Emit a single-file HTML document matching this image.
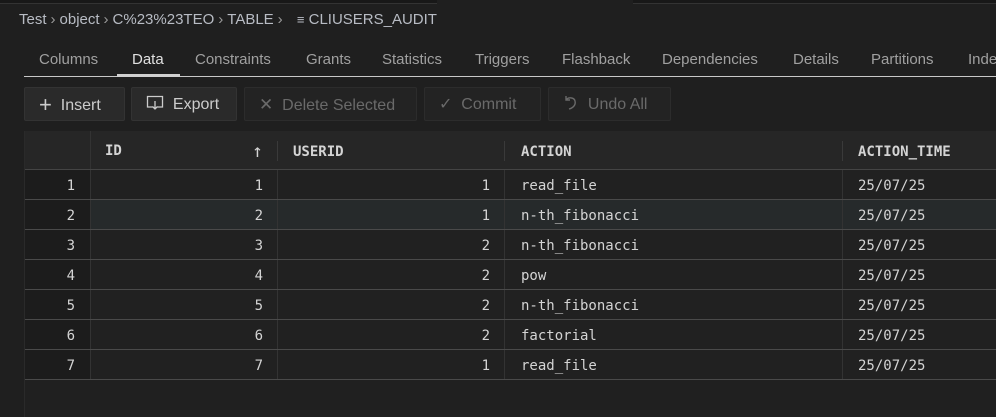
<!DOCTYPE html>
<html><head><style>
*{box-sizing:border-box;margin:0;padding:0}
body{width:996px;height:417px;background:#1f1f1f;font-family:"Liberation Sans",sans-serif;color:#ccc;overflow:hidden;position:relative}
.abs{position:absolute}
.bc{left:19px;top:11px;font-size:15px;color:#b8bcc4;white-space:nowrap}
.bc span.s{color:#9a9a9a;margin:0 4px}
.tabs{left:24px;top:47px;right:0;height:30px;border-bottom:1px solid #c8c8c8;font-size:15px;color:#a0a0a0;white-space:nowrap}
.tabs span{position:absolute;top:4px}
.btn{position:absolute;top:87px;height:34px;border:1px solid #333;background:#2a2a2a;border-radius:2px;font-size:16px;color:#ccc;padding-left:14px;line-height:34px;white-space:nowrap}
.btn.d{background:#232323;color:#6a6a6a;border-color:#2c2c2c}
.tbl{left:24px;top:131px;width:972px;height:286px;background:#202020;border-left:1px solid #2a2a2a}
.row{position:absolute;left:0;width:972px;height:30px;border-bottom:1px solid #4a4a4a;font-family:"DejaVu Sans Mono","Liberation Mono",monospace;font-size:14px;color:#d4d4d4}
.c{position:absolute;top:0;height:100%;line-height:33px;border-left:1px solid #333}
.hd{background:#262626;height:39px;font-weight:bold;border-bottom:1px solid #444}
.hd .c{line-height:39px;border-left:none}
</style></head><body>
<div class="abs" style="left:0;top:0;width:437px;height:4px;background:#181818;border-bottom:1px solid #333"></div>
<div class="abs" style="left:633px;top:0;width:363px;height:4px;background:#181818;border-bottom:1px solid #333"></div>
<div class="abs bc">Test<span class="s">›</span>object<span class="s">›</span>C%23%23TEO<span class="s">›</span>TABLE<span class="s">›</span> <span style="margin-left:6px;font-size:13px">&#8801;</span> CLIUSERS_AUDIT</div>
<div class="abs tabs">
<span style="left:15px">Columns</span><span style="left:108px;color:#e0e0e0">Data</span><span style="left:171px">Constraints</span><span style="left:282px">Grants</span><span style="left:358px">Statistics</span><span style="left:451px">Triggers</span><span style="left:538px">Flashback</span><span style="left:638px">Dependencies</span><span style="left:769px">Details</span><span style="left:847px">Partitions</span><span style="left:944px">Inde</span>
<div class="abs" style="left:93px;top:27px;width:63px;height:3px;background:#d0d0d0"></div>
</div>
<div class="btn" style="left:24px;width:101px"><span style="font-size:22px;vertical-align:-2px">+</span>&nbsp; Insert</div>
<div class="btn" style="left:131px;width:106px"><svg width="18" height="16" style="vertical-align:-2px" fill="none" stroke="#ccc" stroke-width="1.3"><path d="M7 12H1.5V1.5h15V12H11M9 6v8M6.5 11.5L9 14l2.5-2.5"/></svg>&nbsp; Export</div>
<div class="btn d" style="left:244px;width:173px"><span style="font-size:17px">&#10005;</span>&nbsp; Delete Selected</div>
<div class="btn d" style="left:424px;width:117px">&#10003;&nbsp; Commit</div>
<div class="btn d" style="left:548px;width:123px"><svg width="16" height="18" style="vertical-align:-3px" fill="none" stroke="#6a6a6a" stroke-width="1.4"><path d="M3 2v4h4M3 6c2-3 8-3 9 1s-2 7-6 8"/></svg>&nbsp; Undo All</div>
<div class="abs tbl">
<div class="row hd" style="top:0"><div class="c" style="left:65px;width:187px;padding-left:14px;border-left:1px solid #333;line-height:41px">ID<span style="position:absolute;right:14px;font-weight:normal;font-size:18px">&#8593;</span></div><div class="c" style="left:252px;width:227px;padding-left:15px;border-left:1px solid #3a3a3a;height:20px;top:10px;line-height:22px">USERID</div><div class="c" style="left:479px;width:338px;padding-left:16px;border-left:1px solid #3a3a3a;height:20px;top:10px;line-height:22px">ACTION</div><div class="c" style="left:817px;padding-left:15px;border-left:1px solid #3a3a3a;height:20px;top:10px;line-height:22px">ACTION_TIME</div></div>
</div>
<script>
var d=[[1,1,'read_file'],[2,1,'n-th_fibonacci'],[3,2,'n-th_fibonacci'],[4,2,'pow'],[5,2,'n-th_fibonacci'],[6,2,'factorial'],[7,1,'read_file']];
var t=document.querySelector('.tbl'),h='';
d.forEach(function(r,i){var bg=i==1?'#262a2b':'#212121';
h+='<div class="row" style="top:'+(39+i*30)+'px;background:'+bg+'"><div class="c" style="left:0;width:65px;background:#1c1c1c;text-align:right;padding-right:15px;border-left:none">'+r[0]+'</div><div class="c" style="left:65px;width:187px;text-align:right;padding-right:14px">'+r[0]+'</div><div class="c" style="left:252px;width:227px;text-align:right;padding-right:14px">'+r[1]+'</div><div class="c" style="left:479px;width:338px;padding-left:16px">'+r[2]+'</div><div class="c" style="left:817px;padding-left:15px">25/07/25</div></div>';});
t.insertAdjacentHTML('beforeend',h);
</script>
</body></html>
